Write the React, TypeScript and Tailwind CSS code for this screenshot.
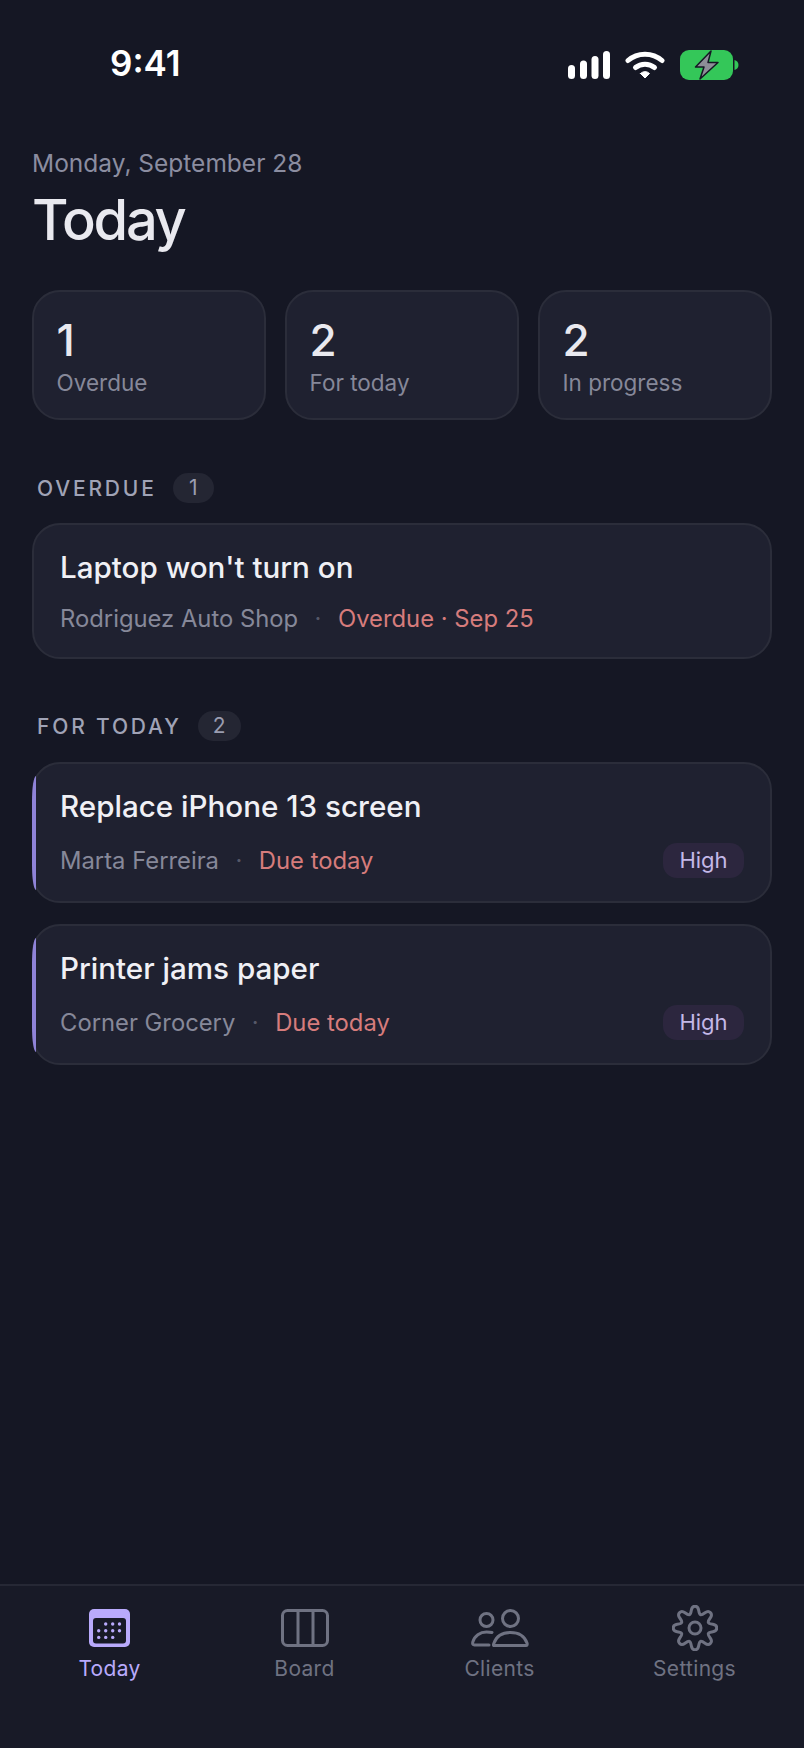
const stats = [
  { value: "1", label: "Overdue" },
  { value: "2", label: "For today" },
  { value: "2", label: "In progress" },
]

const todayTasks = [
  { title: "Replace iPhone 13 screen", client: "Marta Ferreira" },
  { title: "Printer jams paper", client: "Corner Grocery" },
]

// wavy eight-tooth outline: each corner is rounded through the midpoints of its edges
function gearPath(cx: number, cy: number, tip: number, root: number) {
  const pts: [number, number][] = []
  for (let i = 0; i < 8; i++) {
    const a = (i * Math.PI) / 4 - Math.PI / 2
    const offsets: [number, number][] = [
      [-0.3, root],
      [-0.14, tip],
      [0.14, tip],
      [0.3, root],
    ]
    for (const [da, r] of offsets) {
      pts.push([cx + r * Math.cos(a + da), cy + r * Math.sin(a + da)])
    }
  }
  const mid = (p: [number, number], q: [number, number]) =>
    `${((p[0] + q[0]) / 2).toFixed(2)} ${((p[1] + q[1]) / 2).toFixed(2)}`
  let d = `M${mid(pts[pts.length - 1], pts[0])}`
  pts.forEach((p, i) => {
    d += `Q${p[0].toFixed(2)} ${p[1].toFixed(2)} ${mid(p, pts[(i + 1) % pts.length])}`
  })
  return d + "Z"
}

function StatusBar() {
  return (
    <div className="flex h-[100px] items-center justify-between pt-[27px] pr-[65px] pl-[110px]">
      <span className="text-[35px] leading-none font-semibold text-white">9:41</span>
      <div className="mt-[2px] flex items-center gap-[15px]">
        <svg width="42" height="28" viewBox="0 0 42 28" fill="#fff">
          <rect x="0" y="14" width="7" height="14" rx="3.5" />
          <rect x="12" y="9.5" width="7" height="18.5" rx="3.5" />
          <rect x="23.5" y="5" width="7" height="23" rx="3.5" />
          <rect x="35" y="0" width="7" height="28" rx="3.5" />
        </svg>
        <svg width="40" height="28" viewBox="0 0 40 28" fill="none" stroke="#fff" strokeWidth="5" strokeLinecap="round">
          <path d="M3 9.5C12.5 1 27.5 1 37 9.5" />
          <path d="M10.5 16.5C16 12 24 12 29.5 16.5" />
          <path d="M15.5 22.5L20 27L24.5 22.5C22 20 18 20 15.5 22.5Z" fill="#fff" strokeWidth="1" strokeLinejoin="round" />
        </svg>
        <svg width="59" height="30" viewBox="0 0 59 30">
          <rect x="0" y="0" width="53" height="30" rx="9" fill="#34c759" />
          <path d="M54.5 10C57 10.5 58.5 12.5 58.5 15S57 19.5 54.5 20Z" fill="#34c759" />
          <path d="M31 1L15.5 17H24L20 29L38 12.5H28Z" fill="#8e8e98" stroke="#151724" strokeWidth="1.5" strokeLinejoin="round" />
        </svg>
      </div>
    </div>
  )
}

function SectionHeading({ title, count, pillWidth }: { title: string; count: number; pillWidth: string }) {
  return (
    <div className="flex h-[30px] items-center gap-[16px] pl-[5px]">
      <span className="text-[21px] leading-none font-medium tracking-[0.135em] text-[#a0a3b6]">{title}</span>
      <span className={`flex h-[30px] items-center justify-center rounded-full bg-[#242633] text-[21px] text-[#9a9db0] ${pillWidth}`}>
        {count}
      </span>
    </div>
  )
}

function Meta({ client, due }: { client: string; due: string }) {
  return (
    <div className="flex items-center text-[23.8px] leading-[30px]">
      <span className="text-[#868899]">{client}</span>
      <span className="mx-[16.5px] text-[#565868]">·</span>
      <span className="text-[#d67c7c]">{due}</span>
    </div>
  )
}

function TodayIcon() {
  return (
    <svg width="41" height="38" viewBox="0 0 41 38">
      <rect x="0" y="0" width="41" height="38" rx="5" fill="#b9aafc" />
      <rect x="4" y="9" width="33" height="25.5" rx="3" fill="#181a27" />
      <g fill="#b9aafc">
        {[16.7, 23.7, 30.5].map((x) => (
          <circle key={x} cx={x} cy="15" r="1.7" />
        ))}
        {[9.7, 16.7, 23.7, 30.5].map((x) => (
          <circle key={x} cx={x} cy="21.7" r="1.7" />
        ))}
        {[9.7, 16.7, 23.7].map((x) => (
          <circle key={x} cx={x} cy="28.4" r="1.7" />
        ))}
      </g>
    </svg>
  )
}

function BoardIcon() {
  return (
    <svg width="48" height="38" viewBox="0 0 48 38" fill="none" stroke="#6f7282" strokeWidth="3">
      <rect x="1.5" y="1.5" width="45" height="35" rx="5" />
      <path d="M17 1.5V36.5M32 1.5V36.5" />
    </svg>
  )
}

function ClientsIcon() {
  return (
    <svg width="58" height="38" viewBox="0 0 58 38" fill="none" stroke="#6f7282" strokeWidth="3" strokeLinecap="round">
      <circle cx="39.5" cy="9.5" r="8" />
      <circle cx="15.5" cy="11" r="6.5" />
      <path d="M23 36.5H55C56 36.5 56.5 35.5 56 34C53.5 27 47 23.5 39.5 23.5S25.5 27 23 34C22.5 35.5 22 36.5 23 36.5Z" />
      <path d="M21 23.5C19 23 17.5 23 15.5 23C9 23 3.5 27 1.8 33C1.3 35 2 36 3.5 36H18" />
    </svg>
  )
}

function SettingsIcon() {
  return (
    <svg width="46" height="46" viewBox="0 0 46 46" fill="none" stroke="#6f7282" strokeWidth="3">
      <path d={gearPath(23, 23, 22, 14.5)} />
      <circle cx="23" cy="23" r="6" />
    </svg>
  )
}

const tabs = [
  { label: "Today", icon: <TodayIcon />, active: true },
  { label: "Board", icon: <BoardIcon />, active: false },
  { label: "Clients", icon: <ClientsIcon />, active: false },
  { label: "Settings", icon: <SettingsIcon />, active: false },
]

export default function App() {
  return (
    <div className="flex h-[1748px] w-[804px] flex-col overflow-hidden bg-[#151724] font-['Inter',sans-serif]">
      <StatusBar />

      <main className="flex-1 px-[32px]">
        <p className="mt-[47px] text-[24.5px] leading-[32px] text-[#8b8da0]">Monday, September 28</p>
        <h1 className="mt-[7px] text-[56px] leading-[68px] font-medium tracking-[-0.04em] text-[#e9e9ef]">Today</h1>

        <div className="mt-[36px] grid grid-cols-3 gap-[19px]">
          {stats.map((stat) => (
            <div
              key={stat.label}
              className="h-[130px] rounded-[28px] border-2 border-[#2b2d3a] bg-[#1f2130] pt-[22px] pl-[22.5px]"
            >
              <div className="text-[44px] leading-[52px] font-medium text-[#e9e9ef]">{stat.value}</div>
              <div className="mt-[2px] text-[22.5px] leading-[30px] text-[#868899]">{stat.label}</div>
            </div>
          ))}
        </div>

        <div className="mt-[53px]">
          <SectionHeading title="OVERDUE" count={1} pillWidth="w-[41px]" />
        </div>
        <div className="mt-[20px] h-[136px] rounded-[28px] border-2 border-[#2b2d3a] bg-[#1f2130] pt-[23px] pl-[26px]">
          <div className="text-[29.6px] leading-[38px] font-medium text-[#f0f0f5]">Laptop won't turn on</div>
          <div className="mt-[18px]">
            <Meta client="Rodriguez Auto Shop" due="Overdue · Sep 25" />
          </div>
        </div>

        <div className="mt-[52px]">
          <SectionHeading title="FOR TODAY" count={2} pillWidth="w-[43px]" />
        </div>
        <div className="mt-[21px] flex flex-col gap-[21px]">
          {todayTasks.map((task) => (
            <div
              key={task.title}
              className="relative h-[141px] rounded-[28px] border-2 border-[#2b2d3a] bg-[#1f2130] pt-[23px] pr-[26px] pl-[26px]"
            >
              <div className="absolute top-[12px] bottom-[11px] left-[-2px] w-[4.3px] rounded-[4px_0_0_4px/26px_0_0_26px] bg-[#8f83d8]" />
              <div className="text-[29.6px] leading-[38px] font-medium text-[#f0f0f5]">{task.title}</div>
              <div className="mt-[18px] flex items-center justify-between">
                <Meta client={task.client} due="Due today" />
                <span className="flex h-[35px] w-[81px] items-center justify-center rounded-[14px] bg-[#2c263e] text-[22px] text-[#c4b8e8]">
                  High
                </span>
              </div>
            </div>
          ))}
        </div>
      </main>

      <nav className="grid h-[164px] grid-cols-4 border-t-2 border-[#262835] bg-[#181a27] px-[12px]">
        {tabs.map((tab) => (
          <div key={tab.label} className="flex flex-col items-center pt-[13px]">
            <div className="flex h-[57px] items-center justify-center">{tab.icon}</div>
            <span
              className={`text-[21px] leading-[26px] tracking-[0.015em] ${
                tab.active ? "text-[#b9aafc]" : "text-[#6f7282]"
              }`}
            >
              {tab.label}
            </span>
          </div>
        ))}
      </nav>
    </div>
  )
}
